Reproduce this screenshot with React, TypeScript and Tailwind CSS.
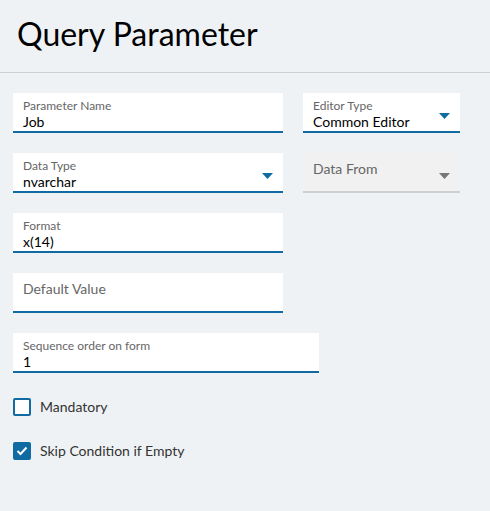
import React from 'react'

function Caret({ color = '#106ba3' }: { color?: string }) {
  return (
    <svg width="11" height="6" viewBox="0 0 11 6" className="shrink-0">
      <path d="M0 0 L11 0 L5.5 6 Z" fill={color} />
    </svg>
  )
}

function TextField({ label, value, width }: { label: string; value?: string; width: string }) {
  return (
    <div className={`${width} h-[40px] bg-white border-b-2 border-[#106ba3] px-[10px]`}>
      {value !== undefined ? (
        <div className="pt-[6px]">
          <div className="text-[12px] leading-[14px] text-[#666]">{label}</div>
          <div className="text-[14px] leading-[18px] text-black">{value}</div>
        </div>
      ) : (
        <div className="pt-[7px] text-[14px] leading-[18px] text-[#666]">{label}</div>
      )}
    </div>
  )
}

function SelectField({ label, value, width, disabled }: { label: string; value?: string; width: string; disabled?: boolean }) {
  return (
    <div
      className={`${width} h-[40px] px-[10px] flex justify-between border-b-2 ${
        disabled ? 'bg-[#f1f1f1] border-[#cfcfcf]' : 'bg-white border-[#106ba3]'
      }`}
    >
      {value !== undefined ? (
        <div className="pt-[6px]">
          <div className="text-[12px] leading-[14px] text-[#666]">{label}</div>
          <div className="text-[14px] leading-[18px] text-black">{value}</div>
        </div>
      ) : (
        <div className="pt-[7px] text-[14px] leading-[18px] text-[#666]">{label}</div>
      )}
      <div className={disabled ? 'pt-[20px]' : 'pt-[20px]'}>
        <Caret color={disabled ? '#777' : '#106ba3'} />
      </div>
    </div>
  )
}

export default function App() {
  return (
    <div className="w-[490px] h-[511px] bg-[#eff2f5] font-['Lato',sans-serif]">
      <div className="h-[73px] border-b border-[#cdd0d3] px-[17px] pt-[14px]">
        <h1 className="text-[32px] leading-[40px] text-black">Query Parameter</h1>
      </div>
      <div className="px-[13px] pt-[20px] flex flex-col gap-[20px]">
        <div className="flex gap-[20px]">
          <TextField label="Parameter Name" value="Job" width="w-[270px]" />
          <SelectField label="Editor Type" value="Common Editor" width="w-[157px]" />
        </div>
        <div className="flex gap-[20px]">
          <SelectField label="Data Type" value="nvarchar" width="w-[270px]" />
          <SelectField label="Data From" width="w-[157px]" disabled />
        </div>
        <TextField label="Format" value="x(14)" width="w-[270px]" />
        <TextField label="Default Value" width="w-[270px]" />
        <TextField label="Sequence order on form" value="1" width="w-[306px]" />
      </div>
      <div className="px-[13px] pt-[25px] flex flex-col gap-[26px]">
        <label className="flex items-center gap-[9px] leading-[18px]">
          <span className="w-[18px] h-[18px] rounded-[2px] border-2 border-[#106ba3] bg-white" />
          <span className="text-[14px] text-[#333]">Mandatory</span>
        </label>
        <label className="flex items-center gap-[9px] leading-[18px]">
          <span className="w-[18px] h-[18px] rounded-[2px] bg-[#106ba3] flex items-center justify-center">
            <svg width="12" height="10" viewBox="0 0 12 10">
              <path d="M1.5 5 L4.5 8 L10.5 1.5" stroke="white" strokeWidth="2" fill="none" />
            </svg>
          </span>
          <span className="text-[14px] text-[#333]">Skip Condition if Empty</span>
        </label>
      </div>
    </div>
  )
}
